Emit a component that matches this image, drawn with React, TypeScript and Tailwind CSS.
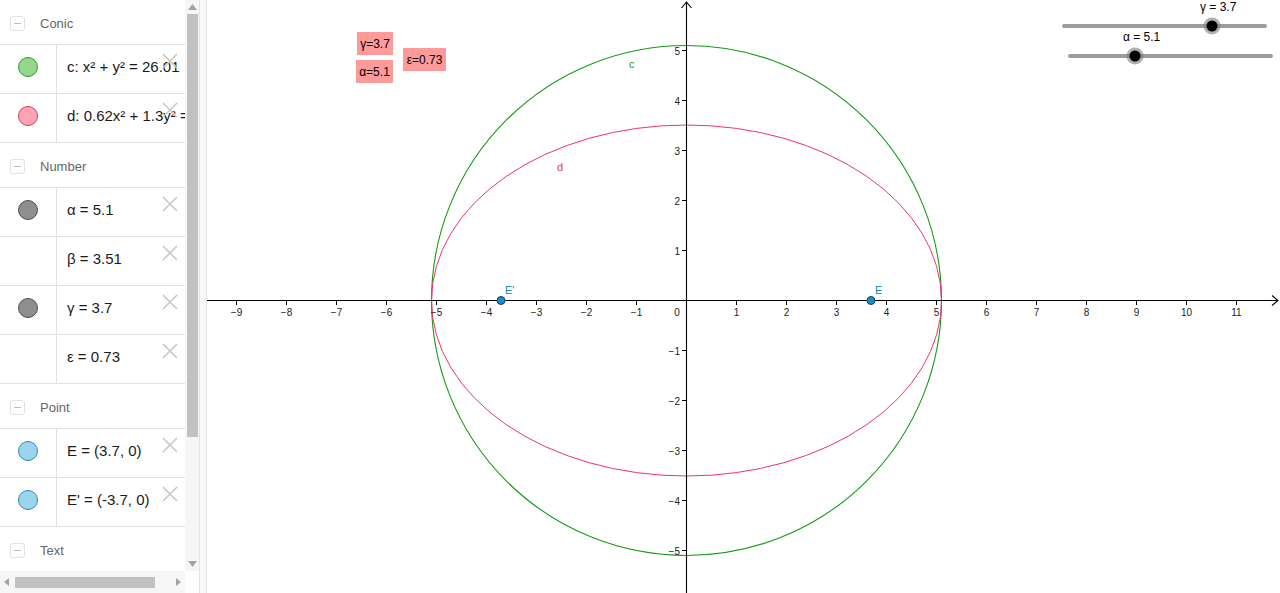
import React from 'react';

// ─── Algebra view data ──────────────────────────────────────

type Dot = { fill: string; stroke: string } | null;

interface Item {
  dot: Dot;
  text: string;
}

interface Group {
  title: string;
  items: Item[];
}

const GREEN: Dot = { fill: '#93d78c', stroke: '#2f9a2f' };
const PINK: Dot = { fill: '#ffa3b5', stroke: '#d4375d' };
const GRAY: Dot = { fill: '#8e8e8e', stroke: '#4f4f4f' };
const BLUE: Dot = { fill: '#9bd5ec', stroke: '#2a8ab8' };

const GROUPS: Group[] = [
  {
    title: 'Conic',
    items: [
      { dot: GREEN, text: 'c: x² + y² = 26.01' },
      { dot: PINK, text: 'd: 0.62x² + 1.3y² = 16.13' },
    ],
  },
  {
    title: 'Number',
    items: [
      { dot: GRAY, text: 'α = 5.1' },
      { dot: null, text: 'β = 3.51' },
      { dot: GRAY, text: 'γ = 3.7' },
      { dot: null, text: 'ε = 0.73' },
    ],
  },
  {
    title: 'Point',
    items: [
      { dot: BLUE, text: 'E = (3.7, 0)' },
      { dot: BLUE, text: "E' = (-3.7, 0)" },
    ],
  },
  { title: 'Text', items: [] },
];

const MinusBox = () => (
  <div className="w-[15px] h-[15px] rounded-[3px] border border-[#e2e2e2] flex items-center justify-center">
    <div className="w-[7px] h-[1px] bg-[#bdbdbd]" />
  </div>
);

const CloseX = () => (
  <svg className="absolute right-[7px] top-[8px]" width="16" height="16" viewBox="0 0 16 16">
    <path d="M1 1 L15 15 M15 1 L1 15" stroke="#c9c9c9" strokeWidth="1.7" />
  </svg>
);

const Row: React.FC<{ item: Item }> = ({ item }) => (
  <div className="relative flex h-[49px] border-t border-[#e0e0e0]">
    <div className="w-[57px] shrink-0 border-r border-[#e0e0e0] flex items-center justify-center pb-[4px]">
      {item.dot && (
        <div
          className="w-[20px] h-[20px] rounded-full border"
          style={{ backgroundColor: item.dot.fill, borderColor: item.dot.stroke }}
        />
      )}
    </div>
    <div className="flex items-center pl-[10px] pb-[4px] whitespace-nowrap text-[15px] text-[#1a1a1a] overflow-hidden">
      {item.text}
    </div>
    <CloseX />
  </div>
);

const AlgebraView = () => (
  <div className="w-[185px] h-[575px] overflow-hidden bg-white font-['Liberation_Sans',Arial,sans-serif]">
    {GROUPS.map(g => (
      <div key={g.title} className="border-b border-[#e0e0e0]">
        <div className="h-[44px] flex items-center gap-[15px] pl-[10px] pt-[3px]">
          <MinusBox />
          <span className="text-[13px] text-[#666]">{g.title}</span>
        </div>
        {g.items.map((it, i) => <Row key={i} item={it} />)}
      </div>
    ))}
  </div>
);

// ─── Graphics view ──────────────────────────────────────────

const OX = 686;
const OY = 300;
const U = 50;

const fmt = (n: number) => (n < 0 ? `\u2212${-n}` : `${n}`);

const Graphics = () => {
  const xs = Array.from({ length: 21 }, (_, i) => i - 9).filter(n => n !== 0);
  const ys = Array.from({ length: 11 }, (_, i) => i - 5).filter(n => n !== 0);
  return (
    <svg
      width="1073"
      height="593"
      viewBox="207 0 1073 593"
      className="block"
      fontFamily="'Liberation Sans', Arial, sans-serif"
    >
      {/* curves */}
      <circle cx={OX + 0.5} cy={OY + 0.5} r={5.1 * U} fill="none" stroke="#159a15" strokeWidth="1.1" />
      <ellipse cx={OX + 0.5} cy={OY + 0.5} rx={5.1 * U} ry={3.51 * U} fill="none" stroke="#f0346a" strokeWidth="1" />

      {/* axes */}
      <line x1="207" y1={OY + 0.5} x2="1278" y2={OY + 0.5} stroke="#000" strokeWidth="1.1" />
      <polyline points="1272,295.5 1278,300.5 1272,305.5" fill="none" stroke="#000" strokeWidth="1.1" />
      <line x1={OX + 0.5} y1="2" x2={OX + 0.5} y2="593" stroke="#000" strokeWidth="1.1" />
      <polyline points="681.5,8 686.5,2 691.5,8" fill="none" stroke="#000" strokeWidth="1.1" />

      {xs.map(n => (
        <g key={`x${n}`}>
          <line x1={OX + n * U + 0.5} y1={OY} x2={OX + n * U + 0.5} y2={OY + 5} stroke="#000" />
          <text x={OX + n * U + 0.5} y={OY + 16} fontSize="10" textAnchor="middle" fill="#222">
            {fmt(n)}
          </text>
        </g>
      ))}
      {ys.map(n => (
        <g key={`y${n}`}>
          <line x1={OX - 4} y1={OY - n * U + 0.5} x2={OX} y2={OY - n * U + 0.5} stroke="#000" />
          <text x={OX - 6} y={OY - n * U + 4.5} fontSize="10" textAnchor="end" fill="#222">
            {fmt(n)}
          </text>
        </g>
      ))}
      <text x="677" y="316" fontSize="10" textAnchor="middle" fill="#222">0</text>

      {/* labels */}
      <text x="629" y="68" fontSize="11" fill="#159a15">c</text>
      <text x="557" y="171" fontSize="11" fill="#e8386a">d</text>

      {/* points */}
      <circle cx={OX + 3.7 * U} cy={OY + 0.5} r="4" fill="#1a8ec4" stroke="#1d3d55" strokeWidth="1" />
      <circle cx={OX - 3.7 * U} cy={OY + 0.5} r="4" fill="#1a8ec4" stroke="#1d3d55" strokeWidth="1" />
      <text x="875" y="294" fontSize="11" fill="#0a86c0">E</text>
      <text x="505" y="294" fontSize="11" fill="#0a86c0">E'</text>

      {/* text boxes */}
      <rect x="357" y="32" width="36" height="23" fill="#ff9a9a" />
      <text x="375" y="48" fontSize="12" textAnchor="middle" fill="#000">γ=3.7</text>
      <rect x="356" y="60" width="37" height="23" fill="#ff9a9a" />
      <text x="374.5" y="76" fontSize="12" textAnchor="middle" fill="#000">α=5.1</text>
      <rect x="403" y="48" width="43" height="23" fill="#ff9a9a" />
      <text x="424.5" y="64" fontSize="12" textAnchor="middle" fill="#000">ε=0.73</text>

      {/* sliders */}
      <line x1="1064" y1="26" x2="1265" y2="26" stroke="#9c9c9c" strokeWidth="4" strokeLinecap="round" />
      <circle cx="1212" cy="26" r="8.5" fill="#7a7a7a" opacity="0.6" />
      <circle cx="1212" cy="26" r="5.5" fill="#000" />
      <text x="1200" y="11" fontSize="12" fill="#000">γ = 3.7</text>

      <line x1="1070" y1="56" x2="1271" y2="56" stroke="#9c9c9c" strokeWidth="4" strokeLinecap="round" />
      <circle cx="1135" cy="56" r="8.5" fill="#7a7a7a" opacity="0.6" />
      <circle cx="1135" cy="56" r="5.5" fill="#000" />
      <text x="1123" y="41" fontSize="12" fill="#000">α = 5.1</text>
    </svg>
  );
};

// ─── App ────────────────────────────────────────────────────

export default function App() {
  return (
    <div className="flex w-[1280px] h-[593px] overflow-hidden bg-white">
      <div className="w-[199px] h-full flex flex-col shrink-0">
        <div className="flex h-[571px]">
          <AlgebraView />
          <div className="w-[14px] h-full bg-[#f6f6f6] flex flex-col items-center">
            <svg width="9" height="6" className="mt-[4px]" viewBox="0 0 9 6">
              <path d="M4.5 0 L9 6 L0 6 Z" fill="#a3a3a3" />
            </svg>
            <div className="w-[11px] h-[423px] mt-[4px] bg-[#c1c1c1]" />
            <div className="flex-1" />
            <svg width="9" height="6" className="mb-[4px]" viewBox="0 0 9 6">
              <path d="M0 0 L9 0 L4.5 6 Z" fill="#a3a3a3" />
            </svg>
          </div>
        </div>
        <div className="flex h-[22px]">
          <div className="w-[185px] h-full bg-[#f6f6f6] flex items-center px-[4px]">
            <svg width="5" height="8" viewBox="0 0 5 8">
              <path d="M5 0 L5 8 L0 4 Z" fill="#a3a3a3" />
            </svg>
            <div className="w-[140px] h-[11px] ml-[6px] bg-[#c1c1c1]" />
            <div className="flex-1" />
            <svg width="5" height="8" viewBox="0 0 5 8">
              <path d="M0 0 L5 4 L0 8 Z" fill="#a3a3a3" />
            </svg>
          </div>
          <div className="w-[14px] h-full bg-white" />
        </div>
      </div>
      <div className="w-[8px] h-full shrink-0 border-l border-r border-[#e2e2e2] bg-[#f8f8f8]" />
      <div className="flex-1 h-full">
        <Graphics />
      </div>
    </div>
  );
}
